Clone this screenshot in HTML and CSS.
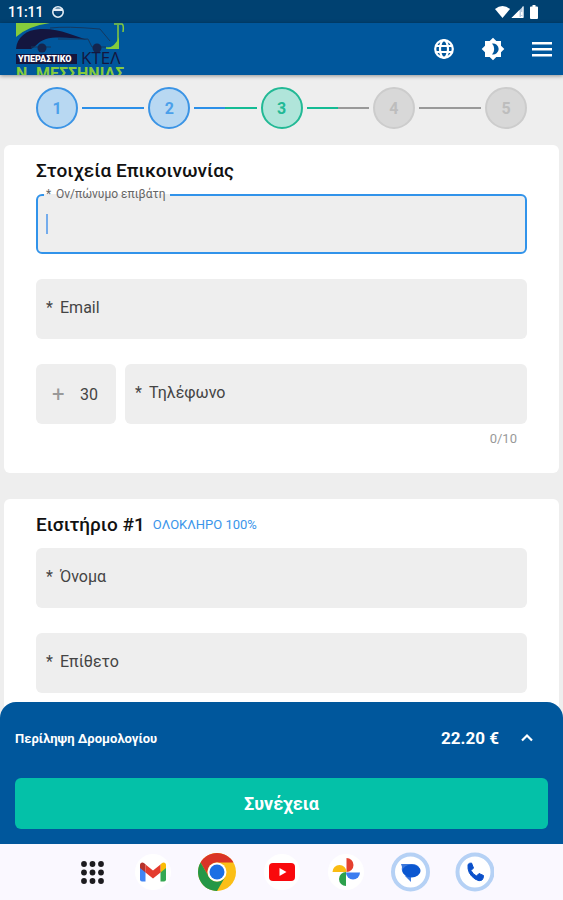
FILE: index.html
```html
<!DOCTYPE html>
<html lang="el">
  <head>
    <meta charset="utf-8">
    <meta name="viewport" content="width=device-width, initial-scale=1">
    <title>Στοιχεία Επικοινωνίας</title>
    <link rel="stylesheet" href="styles.css">
  </head>
  <body>
    <div class="status-bar">
      <span class="time">11:11</span>
      <svg width="12" height="12" viewBox="0 0 12 12">
        <circle cx="6" cy="6" r="5.200" fill="none" stroke="#e4edf5" stroke-width="1.600" />
        <path d="M1 2.500h10v2.500H1z" fill="#e4edf5" />
        <path d="M3 5h6a3 2.800 0 0 1-6 0z" fill="#14497c" />
      </svg>
      <div class="status-icons">
        <svg width="15" height="14" viewBox="0 0 15 14">
          <path d="M0 4Q7.500-2 15 4L7.500 13z" fill="#fff" />
        </svg>
        <svg width="13" height="14" viewBox="0 0 13 14">
          <path d="M12.500 1v12H.5z" fill="#b9cce0" />
          <path d="M8.500 5v8h-8zM10 7h1.500v3H10zM10 11h1.500v2H10z" fill="#fff" />
          <path d="M12 1.500v11H1" fill="none" stroke="#fff" />
        </svg>
        <svg class="battery" width="8" height="14" viewBox="0 0 8 14">
          <path d="M2.500 0h3v1.500H7a1 1 0 0 1 1 1V13a1 1 0 0 1-1 1H1a1 1 0 0 1-1-1V2.500a1 1 0 0 1 1-1h1.500z" fill="#fff" />
        </svg>
      </div>
    </div>

    <header class="header">
      <a class="logo" href="#" aria-label="ΚΤΕΛ Ν. Μεσσηνίας">
        <svg width="122" height="52" viewBox="0 0 122 52">
          <path d="M0 0h34Q12 3 0 14z" fill="#85cb3c" />
          <path d="M0 26C1 14 10 7 24 6c20-1 34 7 48 11-14-2-32-4-42-1-9 3-10 8-15 10z" fill="#14163f" />
          <path d="M34 5Q50 3 84 6l10 12M42 16h30l4 8h14M15 24h20" fill="none" stroke="#14385f" />
          <path d="M98 1h8q2 1 1 8M102 2v20q0 3-4 3h-8" fill="none" stroke="#85cb3c" stroke-width="1.500" />
          <path d="M103 14v12H90q10-3 13-12z" fill="#85cb3c" />
          <circle cx="26" cy="25" r="4.500" fill="#14264f" />
          <circle cx="81" cy="25" r="4.500" fill="#14264f" />
          <path d="M0 31h61v10H0z" fill="#14163f" />
          <text class="logo-tag" x="2" y="39">ΥΠΕΡΑΣΤΙΚΟ</text>
          <text class="logo-name" x="65" y="41">ΚΤΕΛ</text>
          <text class="logo-region" x="0" y="56">Ν. ΜΕΣΣΗΝΙΑΣ</text>
        </svg>
      </a>
      <nav class="header-actions">
        <button class="icon-button" type="button" aria-label="Γλώσσα">
          <svg width="24" height="24" viewBox="0 0 24 24" fill="none" stroke="#fff" stroke-width="2.200">
            <circle cx="12" cy="12" r="8.800" />
            <ellipse cx="12" cy="12" rx="4" ry="8.800" />
            <path d="M3.500 9h17M3.500 15h17" />
          </svg>
        </button>
        <button class="icon-button" type="button" aria-label="Θέμα">
          <svg width="24" height="24" viewBox="0 0 24 24">
            <path d="M20 8.690V4h-4.690L12 .69 8.690 4H4v4.690L.69 12 4 15.310V20h4.690L12 23.310 15.310 20H20v-4.690L23.310 12z" fill="#fff" />
            <path d="M11 6.500A5.600 5.600 0 1 1 11 17.500 8 8 0 0 0 11 6.500z" fill="#00579c" />
          </svg>
        </button>
        <button class="icon-button" type="button" aria-label="Μενού">
          <svg width="24" height="24" viewBox="0 0 24 24">
            <path d="M2 5h20v2.500H2zM2 11h20v2.500H2zM2 17h20v2.500H2z" fill="#fff" />
          </svg>
        </button>
      </nav>
    </header>

    <main class="content">
      <div class="steps">
        <span class="step done">1</span>
        <span class="line line-done"></span>
        <span class="step done">2</span>
        <span class="line line-to-active"></span>
        <span class="step active">3</span>
        <span class="line line-from-active"></span>
        <span class="step">4</span>
        <span class="line"></span>
        <span class="step">5</span>
      </div>

      <section class="card">
        <h2 class="card-title">Στοιχεία Επικοινωνίας</h2>
        <div class="fields">
          <div class="field focused">
            <input id="fullname" type="text">
            <label for="fullname"><span class="star">*</span>Ον/πώνυμο επιβάτη</label>
          </div>
          <div class="field">
            <input id="email" type="email">
            <label for="email"><span class="star">*</span>Email</label>
          </div>
          <div class="phone">
            <div class="prefix">
              <label for="prefix" aria-label="Κωδικός χώρας">+</label>
              <input id="prefix" type="text" value="30">
            </div>
            <div class="field">
              <input id="phone" type="tel" maxlength="10">
              <label for="phone"><span class="star">*</span>Τηλέφωνο</label>
            </div>
          </div>
        </div>
        <div class="counter">0/10</div>
      </section>

      <section class="card">
        <h2 class="card-title">Εισιτήριο #1 <span class="fare">ΟΛΟΚΛΗΡΟ 100%</span></h2>
        <div class="fields">
          <div class="field">
            <input id="firstname" type="text">
            <label for="firstname"><span class="star">*</span>Όνομα</label>
          </div>
          <div class="field">
            <input id="lastname" type="text">
            <label for="lastname"><span class="star">*</span>Επίθετο</label>
          </div>
        </div>
      </section>
    </main>

    <footer class="summary">
      <div class="summary-row">
        <span class="summary-label">Περίληψη Δρομολογίου</span>
        <span class="price">22.20 €</span>
        <button class="icon-button" type="button" aria-label="Άνοιγμα">
          <svg width="24" height="24" viewBox="0 0 24 24">
            <path d="M7 14.500l5-5 5 5" fill="none" stroke="#fff" stroke-width="2.200" />
          </svg>
        </button>
      </div>
      <button class="continue" type="button">Συνέχεια</button>
    </footer>

    <div class="dock">
      <button class="icon-button" type="button" aria-label="Εφαρμογές">
        <svg width="40" height="40" viewBox="0 0 40 40" fill="#1c1b1f">
          <circle cx="14" cy="12" r="2.900" /><circle cx="22.500" cy="12" r="2.900" /><circle cx="31" cy="12" r="2.900" />
          <circle cx="14" cy="20.500" r="2.900" /><circle cx="22.500" cy="20.500" r="2.900" /><circle cx="31" cy="20.500" r="2.900" />
          <circle cx="14" cy="29" r="2.900" /><circle cx="22.500" cy="29" r="2.900" /><circle cx="31" cy="29" r="2.900" />
        </svg>
      </button>
      <button class="icon-button" type="button" aria-label="Gmail">
        <svg width="40" height="40" viewBox="0 0 40 40">
          <circle cx="19" cy="20" r="18" fill="#fff" />
          <path d="M6 15l5.500 4v10.500H8a2 2 0 0 1-2-2z" fill="#4285f4" />
          <path d="M32 15l-5.500 4v10.500H30a2 2 0 0 0 2-2z" fill="#34a853" />
          <path d="M26.500 12.500l1.500-1.500c2-1.500 4 0 4 2V16l-5.500 4.500z" fill="#fbbc04" />
          <path d="M11.500 12.500L10 11c-2-1.500-4 0-4 2v3l5.500 4.500z" fill="#b5322c" />
          <path d="M11.500 12.500l7.500 6 7.500-6v8L19 26.500l-7.500-6z" fill="#e33b2e" />
        </svg>
      </button>
      <button class="icon-button" type="button" aria-label="Chrome">
        <svg width="40" height="40" viewBox="0 0 40 40">
          <circle cx="19" cy="20" r="19" fill="#fbbf16" />
          <path d="M2.550 10.500a19 19 0 0 1 32.900 0H19a9.500 9.500 0 0 0-8.230 14.250z" fill="#da3427" />
          <path d="M2.550 10.500l8.220 14.250A9.500 9.500 0 0 0 27.230 24.750L19 39A19 19 0 0 1 2.550 10.500z" fill="#249746" />
          <circle cx="19" cy="20" r="9.500" fill="#fff" />
          <circle cx="19" cy="20" r="7.500" fill="#1b6fe4" />
        </svg>
      </button>
      <button class="icon-button" type="button" aria-label="YouTube">
        <svg width="40" height="40" viewBox="0 0 40 40">
          <circle cx="20" cy="20" r="18" fill="#fff" />
          <rect x="7" y="11" width="26" height="18" rx="4" fill="#f9090c" />
          <path d="M17.500 16v8l7-4z" fill="#fff" />
        </svg>
      </button>
      <button class="icon-button" type="button" aria-label="Φωτογραφίες">
        <svg width="40" height="40" viewBox="0 0 40 40">
          <circle cx="20" cy="20" r="18" fill="#fff" />
          <path d="M20.500 6a7 7 0 0 1 0 14z" fill="#e5402f" />
          <path d="M34 20.500a7 7 0 0 1-14 0z" fill="#3b7df0" />
          <path d="M20 34a7 7 0 0 1 0-14z" fill="#2ca14c" />
          <path d="M6.500 20a7 7 0 0 1 14 0z" fill="#fabc12" />
        </svg>
      </button>
      <button class="icon-button" type="button" aria-label="Μηνύματα">
        <svg width="40" height="40" viewBox="0 0 40 40">
          <circle cx="20.500" cy="20" r="17.500" fill="#fff" stroke="#b5d1f5" stroke-width="4" />
          <path d="M11 12h11q6 0 8 5l-4 5H14q-3-3-2-7z" fill="#3c78dc" />
          <path d="M15 24l6 6v-6z" fill="#3c78dc" />
          <ellipse cx="21.500" cy="19" rx="9" ry="6.500" fill="#0b57d0" />
        </svg>
      </button>
      <button class="icon-button" type="button" aria-label="Τηλέφωνο">
        <svg width="40" height="40" viewBox="0 0 40 40">
          <circle cx="21" cy="20" r="17.500" fill="#fff" stroke="#b5d1f5" stroke-width="4" />
          <path d="M14 12.500q1-1.500 3.500-1.500l2 5-2.500 2.500q2 4 5.500 5.500l2.500-2.500 4.500 2q0 3-1.500 4.500-2.500 2-7-1-8-5.500-7-14.500z" fill="#0b50ca" stroke="#0b50ca" stroke-linejoin="round" />
        </svg>
      </button>
    </div>
  </body>
</html>
```
FILE: styles.css
```css
* {
  box-sizing: border-box;
}

body {
  margin: 0;
  height: 100vh;
  display: flex;
  flex-direction: column;
  overflow: hidden;
  background: #eee;
  color: #111;
  font-family: Roboto, "Noto Sans", sans-serif;
}

svg {
  display: block;
}

button,
input {
  font-family: inherit;
}

.icon-button {
  padding: 0;
  border: 0;
  background: none;
  cursor: pointer;
}

/* Status bar */
.status-bar {
  flex: none;
  display: flex;
  align-items: center;
  gap: 8px;
  height: 23px;
  padding: 0 25px 0 8px;
  background: #004171;
  color: #fff;
}

.time {
  font-size: 14px;
  font-weight: 500;
}

.status-icons {
  display: flex;
  gap: 1px;
  margin-left: auto;
}

.battery {
  margin-left: 5px;
}

/* Header */
.header {
  flex: none;
  position: relative;
  z-index: 1;
  display: flex;
  align-items: center;
  justify-content: space-between;
  height: 52px;
  padding: 0 9px 0 16px;
  background: #00579c;
  box-shadow: 0 1px 4px rgba(0, 0, 0, 0.4);
}

.logo-tag {
  fill: #fff;
  font-size: 9px;
  font-weight: 900;
}

.logo-name {
  fill: #14163f;
  font-family: "Open Sans", sans-serif;
  font-size: 17px;
}

.logo-region {
  fill: #85cb3c;
  font-size: 16px;
  font-weight: 700;
}

.header-actions {
  display: flex;
  gap: 25px;
}

/* Content */
.content {
  flex: 1;
  min-height: 0;
  overflow-y: auto;
  scrollbar-width: none;
  padding: 0 4px;
}

.steps {
  display: flex;
  align-items: center;
  gap: 4px;
  padding: 12px 32px 16px;
}

.step {
  display: flex;
  align-items: center;
  justify-content: center;
  width: 42px;
  height: 42px;
  border: 2px solid #ccc;
  border-radius: 50%;
  background: #d8d8d8;
  color: #bdbdbd;
  font-size: 16px;
  font-weight: 700;
}

.step.done {
  border-color: #3b94e5;
  background: #b8d8f2;
  color: #4ba0ea;
}

.step.active {
  border-color: #22b995;
  background: #b0e5da;
  color: #22b995;
}

.line {
  flex: 1;
  height: 2px;
  background: #999;
}

.line-done {
  background: #2b8fe8;
}

.line-to-active {
  background: linear-gradient(to right, #2b8fe8 50%, #14bb94 50%);
}

.line-from-active {
  background: linear-gradient(to right, #14bb94 50%, #999 50%);
}

.card {
  margin-bottom: 26px;
  padding: 14px 32px 25px;
  border-radius: 6px;
  background: #fff;
}

.card-title {
  display: flex;
  align-items: center;
  gap: 8px;
  height: 24px;
  margin: 0 0 11px;
  font-size: 19px;
  font-weight: 500;
  line-height: 24px;
}

.fare {
  color: #3a95ea;
  font-size: 13px;
  font-weight: 400;
}

.fields {
  display: flex;
  flex-direction: column;
  gap: 25px;
}

.field {
  position: relative;
  flex: 1;
}

.field input {
  display: block;
  width: 100%;
  height: 60px;
  padding: 0 10px;
  border: 2px solid transparent;
  border-radius: 6px;
  outline: none;
  background: #eee;
  font-size: 16px;
}

.field label {
  position: absolute;
  top: 18px;
  left: 10px;
  color: #444;
  font-size: 16px;
  line-height: 22px;
}

.star {
  display: inline-block;
  width: 14px;
}

.field.focused input {
  border-color: #3193ea;
}

/* floating label cuts through the outline */
.field.focused label {
  top: -10px;
  left: 8px;
  padding: 0 4px 0 2px;
  background: linear-gradient(#fff 50%, #eee 50%);
  color: #666;
  font-size: 12px;
  line-height: 20px;
}

.field.focused .star {
  width: 10px;
}

.field.focused::after {
  content: "";
  position: absolute;
  top: 20px;
  left: 10px;
  width: 2px;
  height: 20px;
  background: #74acec;
}

.phone {
  display: flex;
  gap: 9px;
}

.prefix {
  display: flex;
  align-items: center;
  gap: 12px;
  width: 80px;
  height: 60px;
  padding: 0 12px 0 16px;
  border-radius: 6px;
  background: #eee;
}

.prefix label {
  width: 16px;
  color: #999;
  font-size: 22px;
}

.prefix input {
  flex: 1;
  min-width: 0;
  padding: 0;
  border: 0;
  background: none;
  color: #444;
  font-size: 16px;
}

.counter {
  margin-top: 6px;
  padding-right: 10px;
  color: #999;
  font-size: 13px;
  line-height: 18px;
  text-align: right;
}

/* Trip summary */
.summary {
  flex: none;
  position: relative;
  z-index: 1;
  display: flex;
  flex-direction: column;
  gap: 28px;
  margin-top: -16px;
  padding: 24px 15px 15px;
  border-radius: 16px 16px 0 0;
  background: #00579c;
  color: #fff;
}

.summary-row {
  display: flex;
  align-items: center;
  gap: 16px;
  padding-right: 9px;
}

.summary-label {
  flex: 1;
  font-size: 13px;
  font-weight: 700;
}

.price {
  font-size: 17px;
  font-weight: 700;
}

.continue {
  height: 51px;
  border: 0;
  border-radius: 6px;
  background: #04c1a8;
  color: #fff;
  font-size: 18px;
  font-weight: 700;
  cursor: pointer;
}

/* System dock */
.dock {
  flex: none;
  display: flex;
  align-items: center;
  justify-content: center;
  gap: 24px;
  height: 56px;
  background: #faf8ff;
}
```
